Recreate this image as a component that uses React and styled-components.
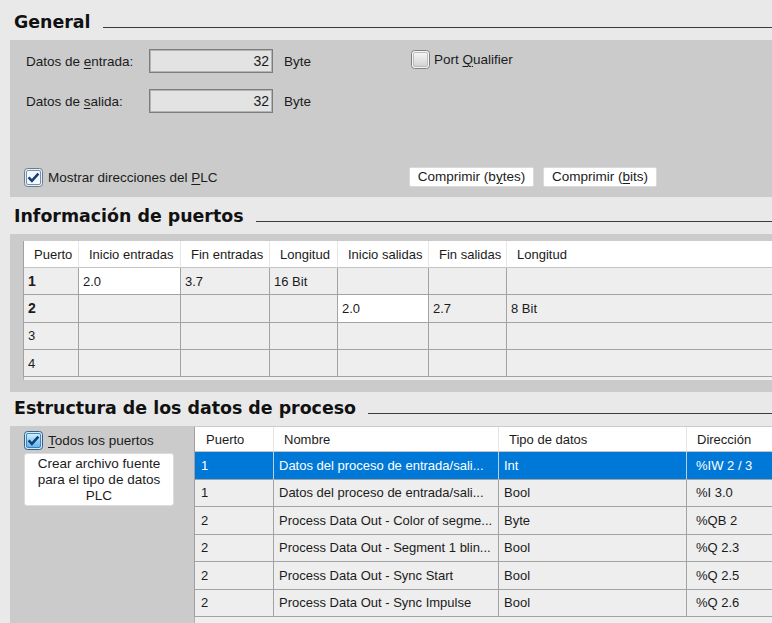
import React from 'react';
import styled, { createGlobalStyle } from 'styled-components';

const GlobalStyle = createGlobalStyle`
  html, body {
    margin: 0;
    padding: 0;
    background: #e9e9e9;
    overflow: hidden;
  }
  body {
    font-family: "Liberation Sans", Arial, sans-serif;
    color: #1b1b1b;
  }
  u {
    text-decoration: underline;
    text-underline-offset: 2px;
  }
`;

const Page = styled.div`
  width: 772px;
  height: 623px;
  overflow: hidden;
  background: #e9e9e9;
`;

const HeadingRow = styled.div`
  display: flex;
  align-items: flex-end;
  box-sizing: border-box;
  height: ${p => p.$h}px;
  padding: 0 0 9px 14px;
`;

const HeadingText = styled.h2`
  margin: 0;
  font-family: "DejaVu Sans", Verdana, sans-serif;
  font-weight: 700;
  font-size: 17.4px;
  line-height: 17px;
  color: #111;
  white-space: nowrap;
`;

const HeadingRule = styled.div`
  flex: 1;
  height: 1px;
  background: #3c3c3c;
  margin: 0 0 3px 12px;
`;

const Panel = styled.div`
  margin-left: 10px;
  background: #cbcbcb;
  box-sizing: border-box;
  overflow: hidden;
`;

const GeneralPanel = styled(Panel)`
  display: flex;
  flex-direction: column;
  height: 157px;
  padding: 9px 0 10px 16px;
`;

const TopRow = styled.div`
  display: flex;
  align-items: flex-start;
`;

const Fields = styled.div`
  display: flex;
  flex-direction: column;
  gap: 16px;
  width: 385px;
`;

const FieldRow = styled.div`
  display: flex;
  align-items: center;
  height: 24px;
  font-size: 13.5px;
`;

const FieldLabel = styled.span`
  width: 123px;
`;

const ValueBox = styled.div`
  box-sizing: border-box;
  width: 124px;
  height: 24px;
  background: #e3e3e3;
  border: 1px solid #7c7c7c;
  box-shadow: inset 0 0 0 1px #b4b4b4;
  text-align: right;
  padding-right: 3px;
  line-height: 22px;
  font-size: 14px;
`;

const Unit = styled.span`
  margin-left: 11px;
`;

const CheckLabel = styled.label`
  display: flex;
  align-items: center;
  gap: ${p => p.$gap || 5}px;
  font-size: 13.5px;
  color: #1b1b1b;
  white-space: nowrap;
  margin-top: ${p => p.$mt || 0}px;
  margin-left: ${p => p.$ml || 0}px;
  width: ${p => (p.$w ? `${p.$w}px` : 'auto')};
  flex-shrink: 0;
`;

const BottomRow = styled.div`
  display: flex;
  align-items: center;
  height: 20px;
  margin-top: auto;
`;

const ButtonGroup = styled.div`
  display: flex;
  gap: 9px;
`;

const FlatButton = styled.button`
  box-sizing: border-box;
  height: 20px;
  width: ${p => p.$w}px;
  padding: 0;
  background: #ffffff;
  border: 1px solid #dadada;
  border-radius: 2px;
  font-family: "Liberation Sans", Arial, sans-serif;
  font-size: 13.5px;
  color: #1b1b1b;
  line-height: 18px;
`;

const PortsPanel = styled(Panel)`
  height: 158px;
  padding: 7px 0 0 13px;
`;

const Grid = styled.div`
  display: grid;
  grid-template-columns: ${p => p.$cols};
  grid-template-rows: ${p => p.$rows};
  border-left: 1px solid #a0a0a0;
  width: max-content;
  font-size: 13px;
`;

const Cell = styled.div`
  box-sizing: border-box;
  display: flex;
  align-items: center;
  padding-left: ${p => p.$pad}px;
  border-right: 1px solid ${p => (p.$head ? '#e6e6e6' : p.$sel ? '#b8cfe8' : '#a3a3a3')};
  border-bottom: 1px solid ${p => (p.$head ? '#c4c4c4' : '#a3a3a3')};
  background: ${p => (p.$sel ? '#0078d7' : p.$head || p.$white ? '#ffffff' : '#eeeeee')};
  color: ${p => (p.$sel ? '#ffffff' : '#1b1b1b')};
  font-weight: ${p => (p.$bold ? 700 : 400)};
  font-size: ${p => (p.$bold ? '14px' : '13px')};
  white-space: nowrap;
  overflow: hidden;
`;

const Strip = styled.div`
  height: ${p => p.$h}px;
  background: #efefef;
  border-left: 1px solid #b0b0b0;
`;

const ProcessPanel = styled(Panel)`
  display: flex;
  height: 200px;
`;

const SidePane = styled.div`
  width: 184px;
  flex-shrink: 0;
  box-sizing: border-box;
  padding: 5px 0 0 14px;
  display: flex;
  flex-direction: column;
  gap: 3px;
`;

const CreateButton = styled.button`
  box-sizing: border-box;
  width: 150px;
  height: 53px;
  padding: 2px 4px 3px;
  background: #ffffff;
  border: 1px solid #dcdcdc;
  border-radius: 3px;
  font-family: "Liberation Sans", Arial, sans-serif;
  font-size: 13.5px;
  line-height: 16px;
  color: #1b1b1b;
  text-align: center;
`;

const TableWrap = styled.div`
  padding-top: 1px;
  flex: 1;
`;

const boxStyles = {
  normal: { outer: '#6f7d8b', fillA: '#e9edf2', inner: '#4a78b0', innerFill: '#f6f9fc' },
  hover: { outer: '#3c5d80', fillA: '#c6ecfd', inner: '#2c6aa6', innerFill: 'url(#hoverFill)' },
  off: { outer: '#808080', fillA: '#f4f4f4', inner: '#b0b0b0', innerFill: 'url(#offFill)' },
};

const CheckBox = ({ checked, variant = 'normal' }) => {
  const s = boxStyles[variant];
  return (
    <svg width="19" height="19" viewBox="0 0 19 19">
      <defs>
        <linearGradient id="hoverFill" x1="0" y1="0" x2="0" y2="1">
          <stop offset="0" stopColor="#d2f0fe" />
          <stop offset="1" stopColor="#5cb6ea" />
        </linearGradient>
        <linearGradient id="offFill" x1="0" y1="0" x2="0" y2="1">
          <stop offset="0" stopColor="#f6f6f6" />
          <stop offset="1" stopColor="#d2d2d2" />
        </linearGradient>
      </defs>
      <rect x="0.5" y="0.5" width="18" height="18" rx="3" fill={s.fillA} stroke={s.outer} />
      <rect x="2.5" y="2.5" width="14" height="14" rx="1.5" fill={s.innerFill} stroke={s.inner} strokeWidth="0.8" />
      {checked && (
        <path d="M4.6 9.4 L7.9 12.8 L14.4 5.6" fill="none" stroke="#163f7a" strokeWidth="2.6" strokeLinejoin="miter" />
      )}
    </svg>
  );
};

const portCols = '55px 102px 89px 68px 91px 78px 280px';
const portHeaders = ['Puerto', 'Inicio entradas', 'Fin entradas', 'Longitud', 'Inicio salidas', 'Fin salidas', 'Longitud'];
const portRows = [
  [{ t: '1', bold: true }, { t: '2.0', white: true }, { t: '3.7' }, { t: '16 Bit' }, { t: '' }, { t: '' }, { t: '' }],
  [{ t: '2', bold: true }, { t: '' }, { t: '' }, { t: '' }, { t: '2.0', white: true }, { t: '2.7' }, { t: '8 Bit' }],
  [{ t: '3' }, { t: '' }, { t: '' }, { t: '' }, { t: '' }, { t: '' }, { t: '' }],
  [{ t: '4' }, { t: '' }, { t: '' }, { t: '' }, { t: '' }, { t: '' }, { t: '' }],
];

const procCols = '79px 225px 188px 110px';
const procHeaders = ['Puerto', 'Nombre', 'Tipo de datos', 'Dirección'];
const procHeadPad = [11, 10, 10, 10];
const procCellPad = [6, 5, 5, 9];
const procRows = [
  ['1', 'Datos del proceso de entrada/sali...', 'Int', '%IW 2 / 3'],
  ['1', 'Datos del proceso de entrada/sali...', 'Bool', '%I 3.0'],
  ['2', 'Process Data Out - Color of segme...', 'Byte', '%QB 2'],
  ['2', 'Process Data Out - Segment 1 blin...', 'Bool', '%Q 2.3'],
  ['2', 'Process Data Out - Sync Start', 'Bool', '%Q 2.5'],
  ['2', 'Process Data Out - Sync Impulse', 'Bool', '%Q 2.6'],
];

export default function App() {
  return (
    <Page>
      <GlobalStyle />

      <HeadingRow $h={40}>
        <HeadingText>General</HeadingText>
        <HeadingRule />
      </HeadingRow>
      <GeneralPanel>
        <TopRow>
          <Fields>
            <FieldRow>
              <FieldLabel>Datos de <u>e</u>ntrada:</FieldLabel>
              <ValueBox>32</ValueBox>
              <Unit>Byte</Unit>
            </FieldRow>
            <FieldRow>
              <FieldLabel>Datos de <u>s</u>alida:</FieldLabel>
              <ValueBox>32</ValueBox>
              <Unit>Byte</Unit>
            </FieldRow>
          </Fields>
          <CheckLabel $gap={4} $mt={1}>
            <CheckBox variant="off" />
            <span>Port <u>Q</u>ualifier</span>
          </CheckLabel>
        </TopRow>
        <BottomRow>
          <CheckLabel $ml={-2} $w={385}>
            <CheckBox checked />
            <span>Mostrar direcciones del <u>P</u>LC</span>
          </CheckLabel>
          <ButtonGroup>
            <FlatButton $w={125}>Comprimir (b<u>y</u>tes)</FlatButton>
            <FlatButton $w={114}>Comprimir (<u>b</u>its)</FlatButton>
          </ButtonGroup>
        </BottomRow>
      </GeneralPanel>

      <HeadingRow $h={37}>
        <HeadingText>Información de puertos</HeadingText>
        <HeadingRule />
      </HeadingRow>
      <PortsPanel>
        <Grid $cols={portCols} $rows="27px repeat(4, 27.3px)">
          {portHeaders.map((h, i) => (
            <Cell key={`h${i}`} $head $pad={10}>{h}</Cell>
          ))}
          {portRows.map((row, r) =>
            row.map((c, i) => (
              <Cell key={`${r}-${i}`} $pad={4} $bold={c.bold} $white={c.white}>{c.t}</Cell>
            ))
          )}
        </Grid>
        <Strip $h={3} />
      </PortsPanel>

      <HeadingRow $h={34}>
        <HeadingText>Estructura de los datos de proceso</HeadingText>
        <HeadingRule />
      </HeadingRow>
      <ProcessPanel>
        <SidePane>
          <CheckLabel>
            <CheckBox checked variant="hover" />
            <span><u>T</u>odos los puertos</span>
          </CheckLabel>
          <CreateButton>Crear archivo fuente para el tipo de datos PLC</CreateButton>
        </SidePane>
        <TableWrap>
          <Grid $cols={procCols} $rows="25px repeat(6, 27.5px)">
            {procHeaders.map((h, i) => (
              <Cell key={`ph${i}`} $head $pad={procHeadPad[i]}>{h}</Cell>
            ))}
            {procRows.map((row, r) =>
              row.map((t, i) => (
                <Cell key={`p${r}-${i}`} $pad={procCellPad[i]} $sel={r === 0}>{t}</Cell>
              ))
            )}
          </Grid>
          <Strip $h={10} />
        </TableWrap>
      </ProcessPanel>
    </Page>
  );
}
